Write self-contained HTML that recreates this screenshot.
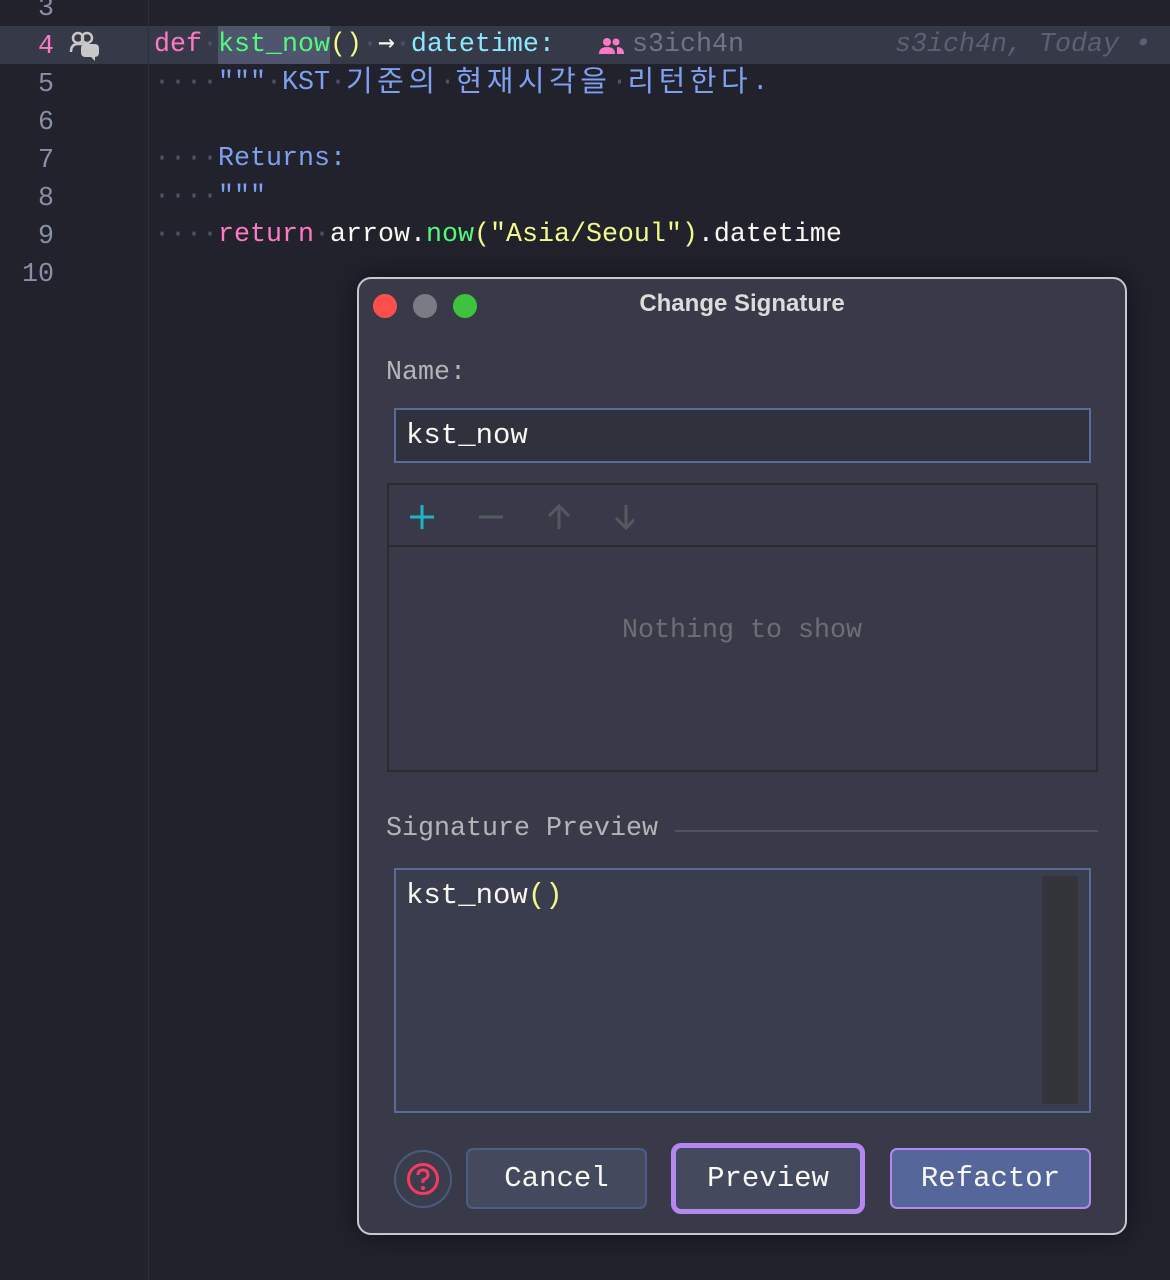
<!DOCTYPE html>
<html><head><meta charset="utf-8"><style>
*{margin:0;padding:0;box-sizing:border-box}
body{width:1170px;height:1280px;background:#21222c;position:relative;overflow:hidden;font-family:"Liberation Mono","Noto Sans CJK KR",monospace;font-size:26.67px;color:#f8f8f2}
.a{position:absolute;white-space:pre;line-height:38px;top:0}
.gut{position:absolute;left:0;top:0;width:149px;height:1280px;border-right:1px solid #2c2e3a}
.ln{position:absolute;width:54px;text-align:right;color:#8a8fa8;line-height:38px}
.cur{position:absolute;left:0;top:26px;width:1170px;height:38px;background:#363948}
.d{color:#50536a}
.k{color:#ff79c6}.g{color:#50fa7b}.y{color:#f1fa8c}.c{color:#8be9fd}.b{color:#7f9ff0}.p{color:#f8f8f2}
.kr{font-family:"Noto Sans CJK KR",sans-serif;font-size:29px;letter-spacing:4.5px;line-height:0;position:relative;top:2px}
.dlg{position:absolute;left:357px;top:277px;width:770px;height:958px;background:#383b47;border:2px solid #c8c8cc;border-radius:14px;box-shadow:0 0 30px #0008}
.dot{position:absolute;top:15px;width:24px;height:24px;border-radius:50%}
.btn{position:absolute;border-radius:7px;text-align:center;color:#f8f8f2;font-size:29px}
</style></head><body>
<div class="cur"></div>
<div class="gut"></div>
<div class="ln" style="top:-10px">3</div>
<div class="ln" style="top:28px;color:#ff79c6">4</div>
<div class="ln" style="top:66px">5</div>
<div class="ln" style="top:104px">6</div>
<div class="ln" style="top:142px">7</div>
<div class="ln" style="top:180px">8</div>
<div class="ln" style="top:218px">9</div>
<div class="ln" style="top:256px">10</div>
<svg style="position:absolute;left:68px;top:30px" width="34" height="32" viewBox="0 0 34 32"><circle cx="10" cy="8" r="5" fill="none" stroke="#c8c8c8" stroke-width="2.5"/><circle cx="19" cy="8" r="5" fill="none" stroke="#c8c8c8" stroke-width="2.5"/><path d="M3 22 Q3 14 10 14 L18 14" fill="none" stroke="#c8c8c8" stroke-width="2.5"/><rect x="13" y="14" width="18" height="13" rx="4" fill="#c8c8c8"/><path d="M22 26 L27 31 L27 26Z" fill="#c8c8c8"/></svg>
<div style="position:absolute;left:218px;top:26px;width:112px;height:38px;background:#50556e"></div>
<div class="a" style="left:154px;top:26px"><span class="k">def</span><span class="d">·</span><span class="g">kst_now</span><span class="y">()</span><span class="d">·</span><span style="font-family:'DejaVu Sans Mono',monospace;font-size:28px;line-height:0">→</span><span class="d">·</span><span class="c">datetime:</span></div>
<svg style="position:absolute;left:599px;top:37px" width="26" height="18" viewBox="0 0 26 18"><circle cx="8" cy="5" r="4" fill="#ff79c6"/><circle cx="17" cy="5" r="3.5" fill="#ff79c6"/><path d="M0 17 Q0 10 8 10 Q16 10 16 17Z M18 10 Q25 10 25 17 L18 17Z" fill="#ff79c6"/></svg>
<div class="a" style="left:632px;top:26px;color:#6f7385">s3ich4n</div>
<div class="a" style="left:895px;top:26px;color:#5d6070;font-style:italic">s3ich4n, Today •</div>
<div class="a" style="left:154px;top:64px"><span class="d">····</span><span class="b">"""<span class="d">·</span>KST<span class="d">·</span><span class="kr">기준의</span><span class="d">·</span><span class="kr">현재시각을</span><span class="d">·</span><span class="kr">리턴한다</span>.</span></div>
<div class="a" style="left:154px;top:140px"><span class="d">····</span><span class="b">Returns:</span></div>
<div class="a" style="left:154px;top:178px"><span class="d">····</span><span class="b">"""</span></div>
<div class="a" style="left:154px;top:216px"><span class="d">····</span><span class="k">return</span><span class="d">·</span>arrow.<span class="g">now</span><span class="y">("Asia/Seoul")</span>.datetime</div>

<div class="dlg">
<div class="dot" style="left:14px;background:#fe4f4f"></div>
<div class="dot" style="left:54px;background:#7a7c84"></div>
<div class="dot" style="left:94px;background:#3ec33e"></div>
<div style="position:absolute;left:0;width:766px;top:11px;text-align:center;font-family:'Liberation Sans',sans-serif;font-weight:bold;font-size:24px;color:#dcdcdc">Change Signature</div>
<div class="a" style="left:27px;top:75px;color:#b4b4b8">Name:</div>
<div style="position:absolute;left:35px;top:129px;width:697px;height:55px;background:#2f313d;border:2px solid #5a6a9a"></div>
<div class="a" style="left:47px;top:138px;font-size:29px">kst_now</div>
<div style="position:absolute;left:28px;top:204px;width:711px;height:289px;border:2px solid #2a2b33"></div>
<div style="position:absolute;left:28px;top:266px;width:711px;height:2px;background:#2a2b33"></div>
<svg style="position:absolute;left:45px;top:220px" width="230" height="36" viewBox="0 0 230 36"><path d="M18 6V30M6 18H30" stroke="#1fb3c8" stroke-width="3"/><path d="M75 18H99" stroke="#555860" stroke-width="3"/><path d="M155 30V7M145 17L155 7L165 17" stroke="#555860" stroke-width="3" fill="none"/><path d="M222 6V29M212 19L222 29L232 19" stroke="#555860" stroke-width="3" fill="none"/></svg>
<div class="a" style="left:263px;top:333px;color:#6c6e76">Nothing to show</div>
<div class="a" style="left:27px;top:531px;color:#b4b4b8">Signature Preview</div>
<div style="position:absolute;left:316px;top:551px;width:423px;height:2px;background:#50535e"></div>
<div style="position:absolute;left:35px;top:589px;width:697px;height:245px;background:#3a3d4d;border:2px solid #5a6a9a"></div>
<div style="position:absolute;left:683px;top:597px;width:36px;height:228px;background:#33353a"></div>
<div class="a" style="left:47px;top:598px;font-size:29px">kst_now<span class="y">()</span></div>
<div style="position:absolute;left:35px;top:871px;width:58px;height:58px;border-radius:50%;border:2px solid #4d5a80;background:#3a3e4c"></div>
<svg style="position:absolute;left:47px;top:883px" width="34" height="34" viewBox="0 0 34 34"><circle cx="17" cy="17" r="14.5" fill="none" stroke="#ff3860" stroke-width="3"/><path d="M12 13Q12 8 17 8Q22 8 22 13Q22 16 17 18V21" fill="none" stroke="#ff3860" stroke-width="3"/><circle cx="17" cy="26" r="2" fill="#ff3860"/></svg>
<div class="btn" style="left:107px;top:869px;width:181px;height:61px;background:#444a5e;border:2px solid #4d5d8a;line-height:57px">Cancel</div>
<div class="btn" style="left:312px;top:864px;width:194px;height:71px;background:#444a5e;border:5px solid #b488f0;border-radius:10px;line-height:61px">Preview</div>
<div class="btn" style="left:531px;top:869px;width:201px;height:61px;background:#55679a;border:2px solid #b488f0;line-height:57px">Refactor</div>
</div>
</body></html>
